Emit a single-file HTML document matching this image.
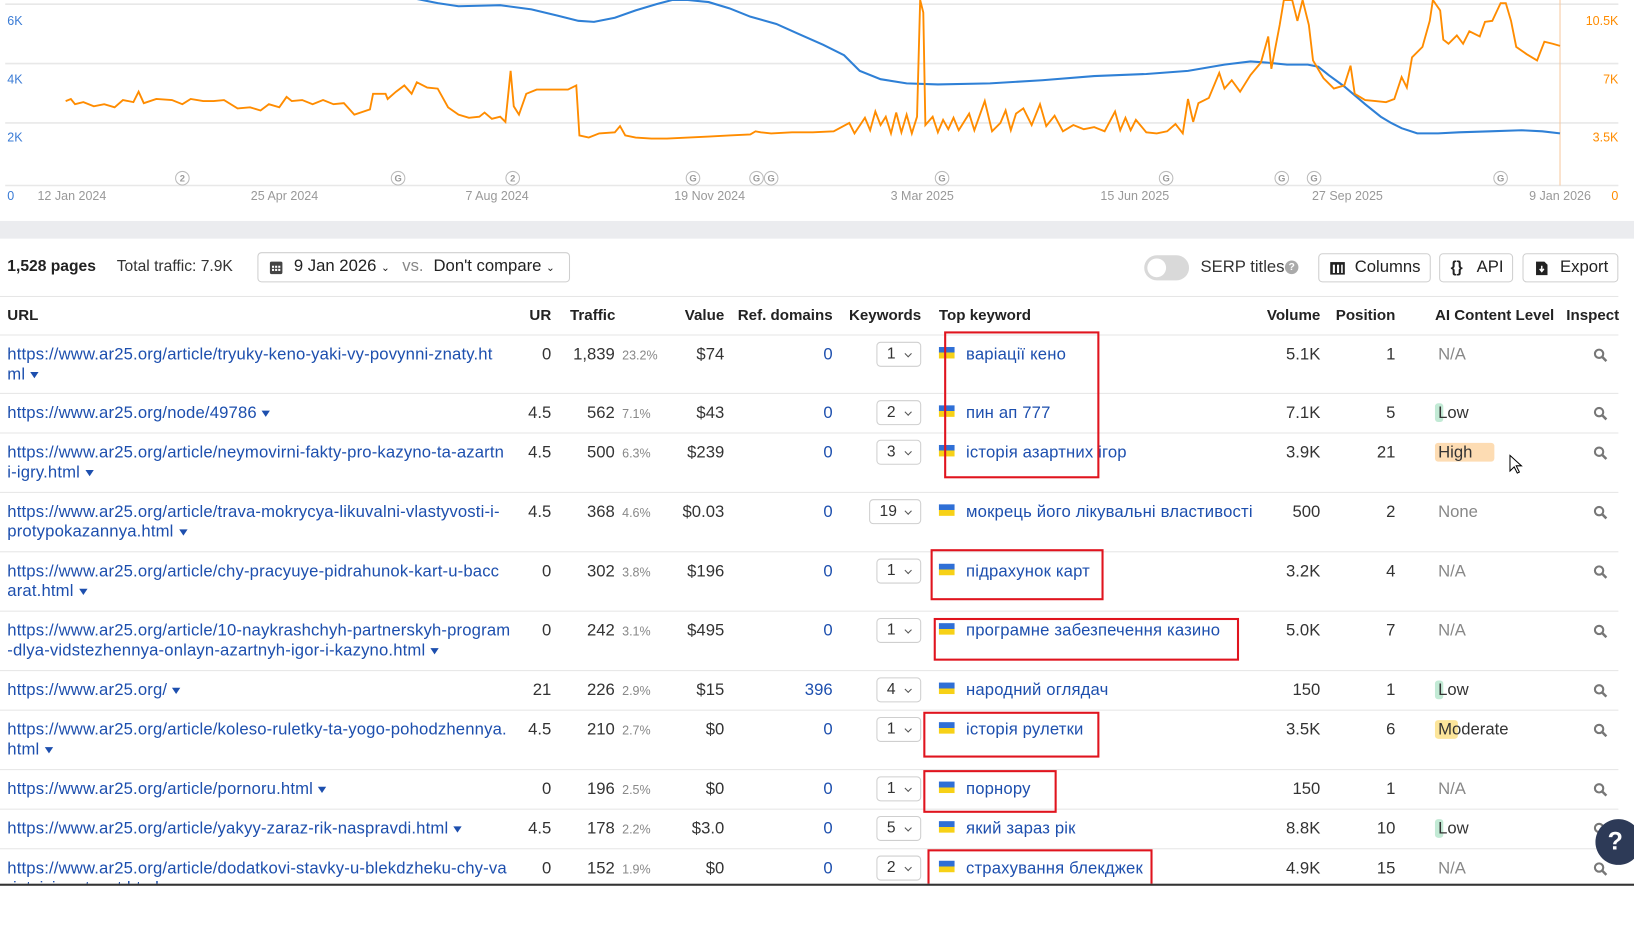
<!DOCTYPE html>
<html><head><meta charset="utf-8">
<style>
*{margin:0;padding:0;box-sizing:border-box}
body{width:1634px;height:886px;overflow:hidden;background:#fff;font-family:"Liberation Sans","Noto Sans CJK SC",sans-serif;font-size:15px;color:#333;position:relative}
#w{position:absolute;left:0;top:0;width:1568px;height:850px;transform:scale(1.04209);transform-origin:0 0}
.a{position:absolute;white-space:nowrap;line-height:19px}
.u{color:#1d4fae;font-size:16px;letter-spacing:0.15px}
.r{text-align:right}
.p{font-size:12px;color:#888}
.hd{font-weight:bold;font-size:14.5px;color:#222}
.line{position:absolute;left:0;width:1553px;height:1px;background:#e6e6e6}
.dd{position:absolute;height:24px;border:1px solid #cfcfcf;border-radius:4px;font-size:15px;line-height:22px;padding-left:9px;background:#fff}
.dd:after{content:"";position:absolute;right:9px;top:8px;width:4px;height:4px;border-right:1.3px solid #555;border-bottom:1.3px solid #555;transform:rotate(45deg)}
.fl{position:absolute;width:15px;height:11px;background:linear-gradient(#2f6fd6 50%,#f7d117 50%)}
.box{position:absolute;border:2px solid #e0141e}
.tri{display:inline-block;width:0;height:0;border-left:4px solid transparent;border-right:4px solid transparent;border-top:6px solid #1d4fae;margin-left:5px;vertical-align:middle}
.btn{position:absolute;top:243px;height:28px;border:1px solid #cfcfcf;border-radius:4px;font-size:15px;line-height:26px;color:#222}
.srch{position:absolute;width:14px;height:14px}
.bad{position:absolute;height:18px;border-radius:3px}
</style></head><body><div id="w">
<svg style="position:absolute;left:0;top:0" width="1568" height="212">
<g stroke="#e8e8e8" stroke-width="1.5"><line x1="5" y1="4" x2="1553" y2="4"/><line x1="5" y1="61" x2="1553" y2="61"/><line x1="5" y1="118" x2="1553" y2="118"/><line x1="5" y1="178" x2="1553" y2="178"/></g>
<line x1="1497" y1="0" x2="1497" y2="178" stroke="#f7c9a0" stroke-width="1"/>
<g font-family="Liberation Sans" font-size="12"><text x="7" y="24" fill="#3a7bd5">6K</text><text x="7" y="80" fill="#3a7bd5">4K</text><text x="7" y="136" fill="#3a7bd5">2K</text><text x="7" y="192" fill="#3a7bd5">0</text>
<g fill="#ff8c00" text-anchor="end"><text x="1553" y="24">10.5K</text><text x="1553" y="80">7K</text><text x="1553" y="136">3.5K</text><text x="1553" y="192">0</text></g>
<g fill="#999" text-anchor="middle"><text x="69" y="192">12 Jan 2024</text><text x="273" y="192">25 Apr 2024</text><text x="477" y="192">7 Aug 2024</text><text x="681" y="192">19 Nov 2024</text><text x="885" y="192">3 Mar 2025</text><text x="1089" y="192">15 Jun 2025</text><text x="1293" y="192">27 Sep 2025</text><text x="1497" y="192">9 Jan 2026</text></g></g>
<g fill="#fff" stroke="#bbb">
<circle cx="175" cy="171" r="6.5"/><circle cx="382" cy="171" r="6.5"/><circle cx="492" cy="171" r="6.5"/><circle cx="665" cy="171" r="6.5"/><circle cx="726" cy="171" r="6.5"/><circle cx="740" cy="171" r="6.5"/><circle cx="904" cy="171" r="6.5"/><circle cx="1119" cy="171" r="6.5"/><circle cx="1230" cy="171" r="6.5"/><circle cx="1261" cy="171" r="6.5"/><circle cx="1440" cy="171" r="6.5"/></g>
<g fill="#999" font-family="Liberation Sans" font-size="9" font-weight="bold" text-anchor="middle">
<text x="175" y="174">2</text><text x="382" y="174">G</text><text x="492" y="174">2</text><text x="665" y="174">G</text><text x="726" y="174">G</text><text x="740" y="174">G</text><text x="904" y="174">G</text><text x="1119" y="174">G</text><text x="1230" y="174">G</text><text x="1261" y="174">G</text><text x="1440" y="174">G</text></g>
<polyline fill="none" stroke="#2f80d6" stroke-width="2" points="395,-2 420,3 440,6 480,5 510,9 535,15 555,20 570,21 590,17 610,10 630,4 645,0 660,0 680,2 700,8 720,16 745,23 765,32 790,43 810,53 825,68 845,76 870,80 900,81 950,80 1000,77 1050,73 1100,71 1140,68 1175,62 1200,59 1215,60 1235,62 1255,62 1265,64 1275,72 1290,83 1310,100 1325,112 1335,118 1345,123 1360,128 1380,128 1400,127 1430,126 1460,125 1480,126 1497,128"/>
<polyline fill="none" stroke="#ff8c00" stroke-width="1.8" points="63,97 68,95 72,100 80,98 90,102 100,100 110,103 118,96 128,98 133,88 138,99 150,95 165,96 175,100 183,95 195,97 205,97 215,96 228,104 240,103 250,106 258,100 268,103 275,93 280,97 290,96 300,100 310,96 320,100 330,99 340,110 355,105 358,90 370,90 372,95 380,88 388,82 395,90 400,79 410,84 420,85 430,103 440,110 450,113 460,112 465,108 472,114 480,112 485,117 490,68 493,102 498,110 505,90 515,86 530,86 545,86 553,82 556,130 565,132 575,128 590,127 595,121 600,130 610,132 625,133 640,133 660,132 680,131 700,130 720,129 725,126 730,127 740,128 760,127 780,127 800,126 815,118 820,128 830,113 835,125 840,107 845,120 850,112 855,128 860,108 865,127 870,110 875,128 880,112 883,0 886,12 888,120 895,112 900,127 905,115 910,124 915,113 920,125 930,109 935,125 945,97 952,126 960,118 965,106 970,125 975,109 982,104 990,120 998,100 1004,121 1012,111 1020,126 1030,120 1040,124 1050,122 1060,126 1070,107 1075,125 1080,113 1085,125 1090,115 1100,127 1110,128 1120,126 1128,119 1135,128 1140,95 1145,117 1150,99 1160,94 1170,70 1175,85 1182,77 1190,88 1200,72 1210,60 1217,35 1220,66 1228,24 1232,0 1240,0 1245,20 1250,0 1256,24 1260,58 1270,75 1280,85 1290,82 1296,63 1300,90 1310,96 1320,97 1330,98 1338,95 1345,74 1350,84 1355,55 1365,45 1372,20 1375,0 1382,10 1385,38 1390,42 1398,34 1404,42 1410,30 1420,35 1425,21 1432,20 1440,3 1445,3 1450,20 1455,45 1465,52 1475,58 1482,40 1490,42 1497,44"/>
</svg>
<div style="position:absolute;left:0;top:212px;width:1568px;height:17px;background:#ebecef"></div>

<div class="a" style="left:7px;top:246px;font-weight:bold;color:#222">1,528 pages</div>
<div class="a" style="left:112px;top:246px;color:#333">Total traffic: 7.9K</div>
<div style="position:absolute;left:247px;top:242px;width:300px;height:29px;border:1px solid #cfcfcf;border-radius:4px"></div>
<svg style="position:absolute;left:258px;top:249px" width="14" height="15"><rect x="1" y="2" width="12" height="12" rx="1.5" fill="#444"/><g fill="#fff"><rect x="3" y="6" width="2" height="2"/><rect x="6" y="6" width="2" height="2"/><rect x="9" y="6" width="2" height="2"/><rect x="3" y="9" width="2" height="2"/><rect x="6" y="9" width="2" height="2"/><rect x="9" y="9" width="2" height="2"/></g></svg>
<div class="a" style="left:282px;top:246px;color:#222;font-size:16px">9 Jan 2026 <span style="font-size:10px">&#8964;</span></div>
<div class="a" style="left:386px;top:246px;color:#888;font-size:16px">vs.</div>
<div class="a" style="left:416px;top:246px;color:#222;font-size:16px">Don't compare <span style="font-size:10px">&#8964;</span></div>
<div style="position:absolute;left:1098px;top:245px;width:43px;height:24px;border-radius:12px;background:#d9d9d9"></div>
<div style="position:absolute;left:1101px;top:248px;width:18px;height:18px;border-radius:9px;background:#fff"></div>
<div class="a" style="left:1152px;top:247px;color:#333;font-size:16px">SERP titles</div>
<div style="position:absolute;left:1233px;top:250px;width:13px;height:13px;border-radius:7px;background:#aaa;color:#fff;font-size:10px;line-height:13px;text-align:center;font-weight:bold">?</div>
<div class="btn" style="left:1265px;width:108px"><svg style="position:absolute;left:10px;top:7px" width="15" height="13"><rect x="0.5" y="0.5" width="14" height="12" fill="#222"/><rect x="3" y="3" width="2" height="8" fill="#fff"/><rect x="7" y="3" width="2" height="8" fill="#fff"/><rect x="11" y="3" width="1.5" height="8" fill="#fff"/></svg><span style="position:absolute;left:34px;font-size:16px">Columns</span></div>
<div class="btn" style="left:1381px;width:71px"><span style="position:absolute;left:10px;font-weight:bold">{}</span><span style="position:absolute;left:35px;font-size:16px">API</span></div>
<div class="btn" style="left:1461px;width:92px"><svg style="position:absolute;left:11px;top:6px" width="13" height="15"><path d="M1 1h8l3 3v10H1z" fill="#222"/><path d="M6.5 5v5M4.5 8l2 2.5 2-2.5" stroke="#fff" stroke-width="1.4" fill="none"/></svg><span style="position:absolute;left:35px;font-size:16px">Export</span></div>

<div class="line" style="top:284px"></div>
<div class="a hd" style="left:7px;top:294px">URL</div>
<div class="a hd r" style="left:480px;width:49px;top:294px">UR</div>
<div class="a hd" style="left:547px;top:294px">Traffic</div>
<div class="a hd r" style="left:620px;width:75px;top:294px">Value</div>
<div class="a hd r" style="left:700px;width:99px;top:294px">Ref. domains</div>
<div class="a hd r" style="left:800px;width:84px;top:294px">Keywords</div>
<div class="a hd" style="left:901px;top:294px">Top keyword</div>
<div class="a hd r" style="left:1180px;width:87px;top:294px">Volume</div>
<div class="a hd r" style="left:1280px;width:59px;top:294px">Position</div>
<div class="a hd" style="left:1377px;top:294px">AI Content Level</div>
<div class="a hd" style="left:1503px;top:294px">Inspect</div>
<div class="line" style="top:321px"></div>

<div id="rows"></div>
<script>
var R=[
[322,["https://www.ar25.org/article/tryuky-keno-yaki-vy-povynni-znaty.ht","ml"],"0","1,839","23.2%","$74","0","1","варіації кено","5.1K","1","N/A",56],
[378,["https://www.ar25.org/node/49786"],"4.5","562","7.1%","$43","0","2","пин ап 777","7.1K","5","Low",38],
[416,["https://www.ar25.org/article/neymovirni-fakty-pro-kazyno-ta-azartn","i-igry.html"],"4.5","500","6.3%","$239","0","3","історія азартних ігор","3.9K","21","High",57],
[473,["https://www.ar25.org/article/trava-mokrycya-likuvalni-vlastyvosti-i-","protypokazannya.html"],"4.5","368","4.6%","$0.03","0","19","мокрець його лікувальні властивості","500","2","None",57],
[530,["https://www.ar25.org/article/chy-pracyuye-pidrahunok-kart-u-bacc","arat.html"],"0","302","3.8%","$196","0","1","підрахунок карт","3.2K","4","N/A",57],
[587,["https://www.ar25.org/article/10-naykrashchyh-partnerskyh-program","-dlya-vidstezhennya-onlayn-azartnyh-igor-i-kazyno.html"],"0","242","3.1%","$495","0","1","програмне забезпечення казино","5.0K","7","N/A",57],
[644,["https://www.ar25.org/"],"21","226","2.9%","$15","396","4","народний оглядач","150","1","Low",38],
[682,["https://www.ar25.org/article/koleso-ruletky-ta-yogo-pohodzhennya.","html"],"4.5","210","2.7%","$0","0","1","історія рулетки","3.5K","6","Moderate",57],
[739,["https://www.ar25.org/article/pornoru.html"],"0","196","2.5%","$0","0","1","порнору","150","1","N/A",38],
[777,["https://www.ar25.org/article/yakyy-zaraz-rik-naspravdi.html"],"4.5","178","2.2%","$3.0","0","5","який зараз рік","8.8K","10","Low",38],
[815,["https://www.ar25.org/article/dodatkovi-stavky-u-blekdzheku-chy-va","riatsiyi-vartuyut.html"],"0","152","1.9%","$0","0","2","страхування блекджек","4.9K","15","N/A",57]
];
var h="";
R.forEach(function(r){
var t=r[0],y=t+9;
var u=r[1];
if(u.length==1){h+='<div class="a u" style="left:7px;top:'+y+'px">'+u[0]+'<span class="tri"></span></div>';}
else{h+='<div class="a u" style="left:7px;top:'+y+'px">'+u[0]+'</div><div class="a u" style="left:7px;top:'+(y+19)+'px">'+u[1]+'<span class="tri"></span></div>';}
h+='<div class="a r" style="left:480px;width:49px;top:'+y+'px;font-size:16px">'+r[2]+'</div>';
h+='<div class="a r" style="left:540px;width:50px;top:'+y+'px;font-size:16px">'+r[3]+'</div>';
h+='<div class="a p" style="left:597px;top:'+(y+1)+'px">'+r[4]+'</div>';
h+='<div class="a r" style="left:620px;width:75px;top:'+y+'px;font-size:16px">'+r[5]+'</div>';
h+='<div class="a r" style="left:700px;width:99px;top:'+y+'px;color:#1d4fae;font-size:16px">'+r[6]+'</div>';
var w=r[7].length>1?50:43;
h+='<div class="dd" style="left:'+(884-w)+'px;width:'+w+'px;top:'+(y-3)+'px">'+r[7]+'</div>';
h+='<div class="fl" style="left:901px;top:'+(y+2)+'px"></div>';
h+='<div class="a u" style="left:927px;top:'+y+'px">'+r[8]+'</div>';
h+='<div class="a r" style="left:1180px;width:87px;top:'+y+'px;font-size:16px">'+r[9]+'</div>';
h+='<div class="a r" style="left:1280px;width:59px;top:'+y+'px;font-size:16px">'+r[10]+'</div>';
var a=r[11];
if(a=="Low")h+='<div class="bad" style="left:1377px;top:'+y+'px;width:8px;background:#c2ead5"></div>';
if(a=="High")h+='<div class="bad" style="left:1377px;top:'+y+'px;width:57px;background:#fddcb3"></div>';
if(a=="Moderate")h+='<div class="bad" style="left:1377px;top:'+y+'px;width:22px;background:#fce59a"></div>';
var c=(a=="N/A"||a=="None")?"#888":"#333";
h+='<div class="a" style="left:1380px;top:'+y+'px;color:'+c+';font-size:16px">'+a+'</div>';
h+='<svg class="srch" style="left:1529px;top:'+(y+3)+'px"><circle cx="5.5" cy="5.5" r="4" stroke="#777" stroke-width="2" fill="none"/><line x1="8.5" y1="8.5" x2="12.5" y2="12.5" stroke="#777" stroke-width="2.4"/></svg>';
h+='<div class="line" style="top:'+(t+r[12]-1)+'px"></div>';
});
document.getElementById("rows").innerHTML=h;
</script>

<div class="box" style="left:906px;top:318px;width:149px;height:141px"></div>
<div class="box" style="left:893px;top:527px;width:166px;height:49px"></div>
<div class="box" style="left:896px;top:593px;width:293px;height:41px"></div>
<div class="box" style="left:886px;top:683px;width:169px;height:44px"></div>
<div class="box" style="left:886px;top:739px;width:128px;height:41px"></div>
<div class="box" style="left:890px;top:815px;width:216px;height:40px"></div>

<svg style="position:absolute;left:1448px;top:436px" width="14" height="20"><path d="M1 1v15l4-4 3 6 2-1-3-6h5z" fill="#fff" stroke="#000" stroke-width="1"/></svg>

<div style="position:absolute;left:1531px;top:786px;width:44px;height:44px;border-radius:22px;background:#2d3a57;color:#fff;font-weight:bold;font-size:24px;line-height:44px;text-align:center;text-indent:-6px">?</div>
<div style="position:absolute;left:0;top:848px;width:1568px;height:40px;background:#fff;border-top:2px solid #333"></div>
</div></body></html>
